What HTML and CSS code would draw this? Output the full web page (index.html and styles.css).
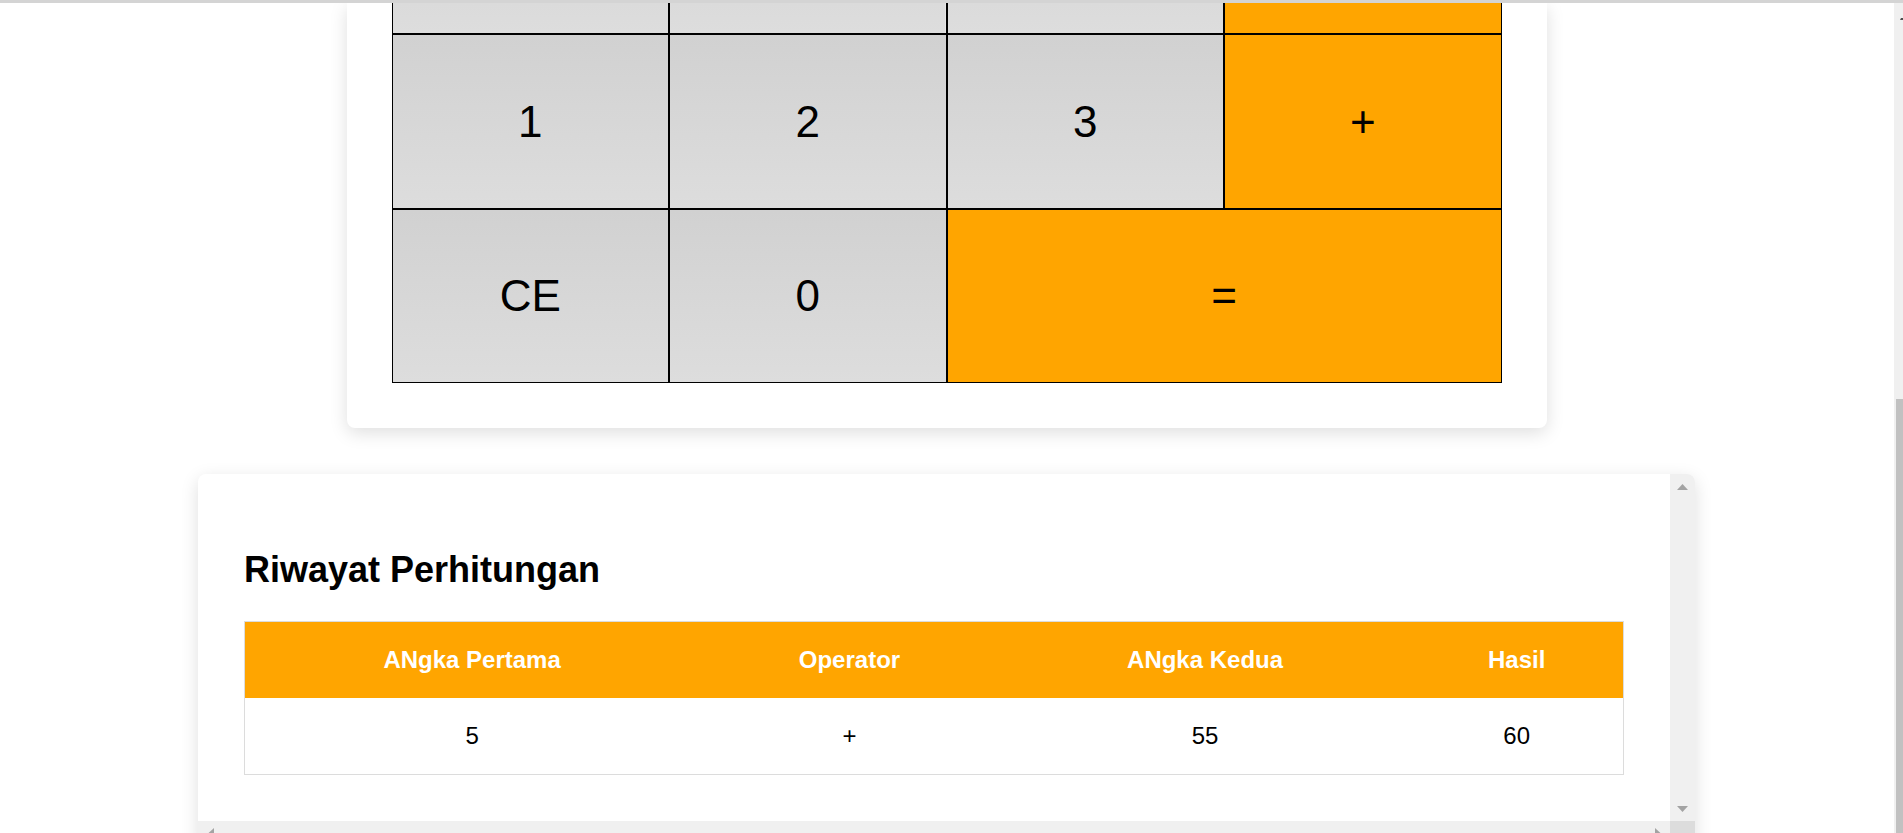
FILE: index.html
```html
<!DOCTYPE html>
<html lang="id">
<head>
<meta charset="utf-8">
<title>Kalkulator</title>
<link rel="stylesheet" href="styles.css">
</head>
<body>
<div class="topline"></div>
<div class="viewport">
  <main class="page">
    <section class="calc-card">
      <div class="keys">
        <button class="key key-partial"></button>
        <button class="key key-partial"></button>
        <button class="key key-partial"></button>
        <button class="key key-partial key-op"></button>
        <button class="key">1</button>
        <button class="key">2</button>
        <button class="key">3</button>
        <button class="key key-op">+</button>
        <button class="key">CE</button>
        <button class="key">0</button>
        <button class="key key-op key-wide">=</button>
      </div>
    </section>

    <section class="history-card">
      <div class="history-content">
        <h2 class="history-title">Riwayat Perhitungan</h2>
        <table class="history-table">
          <thead>
            <tr>
              <th>ANgka Pertama</th>
              <th>Operator</th>
              <th>ANgka Kedua</th>
              <th>Hasil</th>
            </tr>
          </thead>
          <tbody>
            <tr>
              <td>5</td>
              <td>+</td>
              <td>55</td>
              <td>60</td>
            </tr>
          </tbody>
        </table>
      </div>
      <div class="vbar">
        <span class="sb-btn"><svg width="11" height="6" viewBox="0 0 11 6"><polygon points="0,6 5.5,0 11,6" fill="#a3a3a3"/></svg></span>
        <span class="sb-btn"><svg width="11" height="6" viewBox="0 0 11 6"><polygon points="0,0 11,0 5.5,6" fill="#a3a3a3"/></svg></span>
      </div>
      <div class="hbar">
        <span class="sb-btn"><svg width="6" height="11" viewBox="0 0 6 11"><polygon points="6,0 6,11 0,5.5" fill="#a3a3a3"/></svg></span>
        <span class="sb-btn"><svg width="6" height="11" viewBox="0 0 6 11"><polygon points="0,0 0,11 6,5.5" fill="#a3a3a3"/></svg></span>
      </div>
      <div class="corner"></div>
    </section>
  </main>

  <div class="page-scroll">
    <svg class="page-arrow" width="9" height="22" viewBox="0 0 9 22"><polygon points="7,15 9,15 9,17 6,17" fill="#505050"/></svg>
    <div class="page-thumb"></div>
  </div>
</div>
</body>
</html>
```

FILE: styles.css
```css
* {
  box-sizing: border-box;
}

html,
body {
  margin: 0;
  height: 100%;
}

body {
  font-family: "Liberation Sans", Arial, sans-serif;
  background: #ffffff;
  color: #000000;
  overflow: hidden;
  display: flex;
  flex-direction: column;
}

.topline {
  flex: none;
  height: 3px;
  background: #d4d4d4;
}

.viewport {
  flex: 1;
  min-height: 0;
  display: flex;
}

.page {
  flex: 1;
  min-width: 0;
  display: flex;
  flex-direction: column;
  align-items: center;
  overflow: hidden;
}

/* ---------- calculator ---------- */

.calc-card {
  flex: none;
  width: 1200px;
  padding: 0 45px 45px;
  background: #ffffff;
  border-radius: 0 0 8px 8px;
  box-shadow: 0 5px 18px rgba(0, 0, 0, 0.13);
}

.keys {
  display: grid;
  grid-template-columns: repeat(4, 1fr);
  grid-template-rows: 31px 175px 174px;
}

.key {
  margin: 0;
  padding: 0;
  border: 1px solid #000000;
  background: linear-gradient(to bottom, #d1d1d1, #dddddd);
  font-family: "Liberation Sans", Arial, sans-serif;
  font-size: 44px;
  color: #000000;
  cursor: pointer;
}

.key-partial {
  border-top: 0;
  background-size: 100% 174px;
  background-position: bottom;
  background-repeat: no-repeat;
}

.key-op {
  background: #ffa500;
}

.key-wide {
  grid-column: span 2;
}

/* ---------- history ---------- */

.history-card {
  flex: none;
  width: 1497px;
  margin-top: 46px;
  background: #ffffff;
  border-radius: 8px 8px 0 0;
  box-shadow: 0 5px 18px rgba(0, 0, 0, 0.13);
  overflow: hidden;
  display: grid;
  grid-template-columns: 1fr 25px;
  grid-template-rows: 347px 25px;
}

.history-content {
  padding: 45px 46px;
  overflow: hidden;
}

.history-title {
  margin: 30px 0 31px;
  font-size: 36px;
  line-height: 41px;
  font-weight: bold;
}

.history-table {
  width: 100%;
  border-collapse: collapse;
  border: 1px solid #dcdcdc;
  font-size: 24px;
}

.history-table th,
.history-table td {
  padding: 24px;
  line-height: 28px;
  text-align: center;
}

.history-table th {
  background: #ffa500;
  color: #ffffff;
  font-weight: bold;
}

.vbar {
  background: #f0f0f0;
  display: flex;
  flex-direction: column;
  justify-content: space-between;
}

.hbar {
  background: #f0f0f0;
  display: flex;
  justify-content: space-between;
}

.sb-btn {
  width: 25px;
  height: 25px;
  display: flex;
  align-items: center;
  justify-content: center;
}

.corner {
  background: #dcdcdc;
}

/* ---------- page scrollbar ---------- */

.page-scroll {
  flex: none;
  width: 10px;
  border-left: 1px solid #ffffff;
  background: #f0f0f0;
  display: flex;
  flex-direction: column;
}

.page-arrow {
  display: block;
  flex: none;
}

.page-thumb {
  margin-top: auto;
  margin-left: 2px;
  height: 434px;
  background: #c1c1c1;
}
```
